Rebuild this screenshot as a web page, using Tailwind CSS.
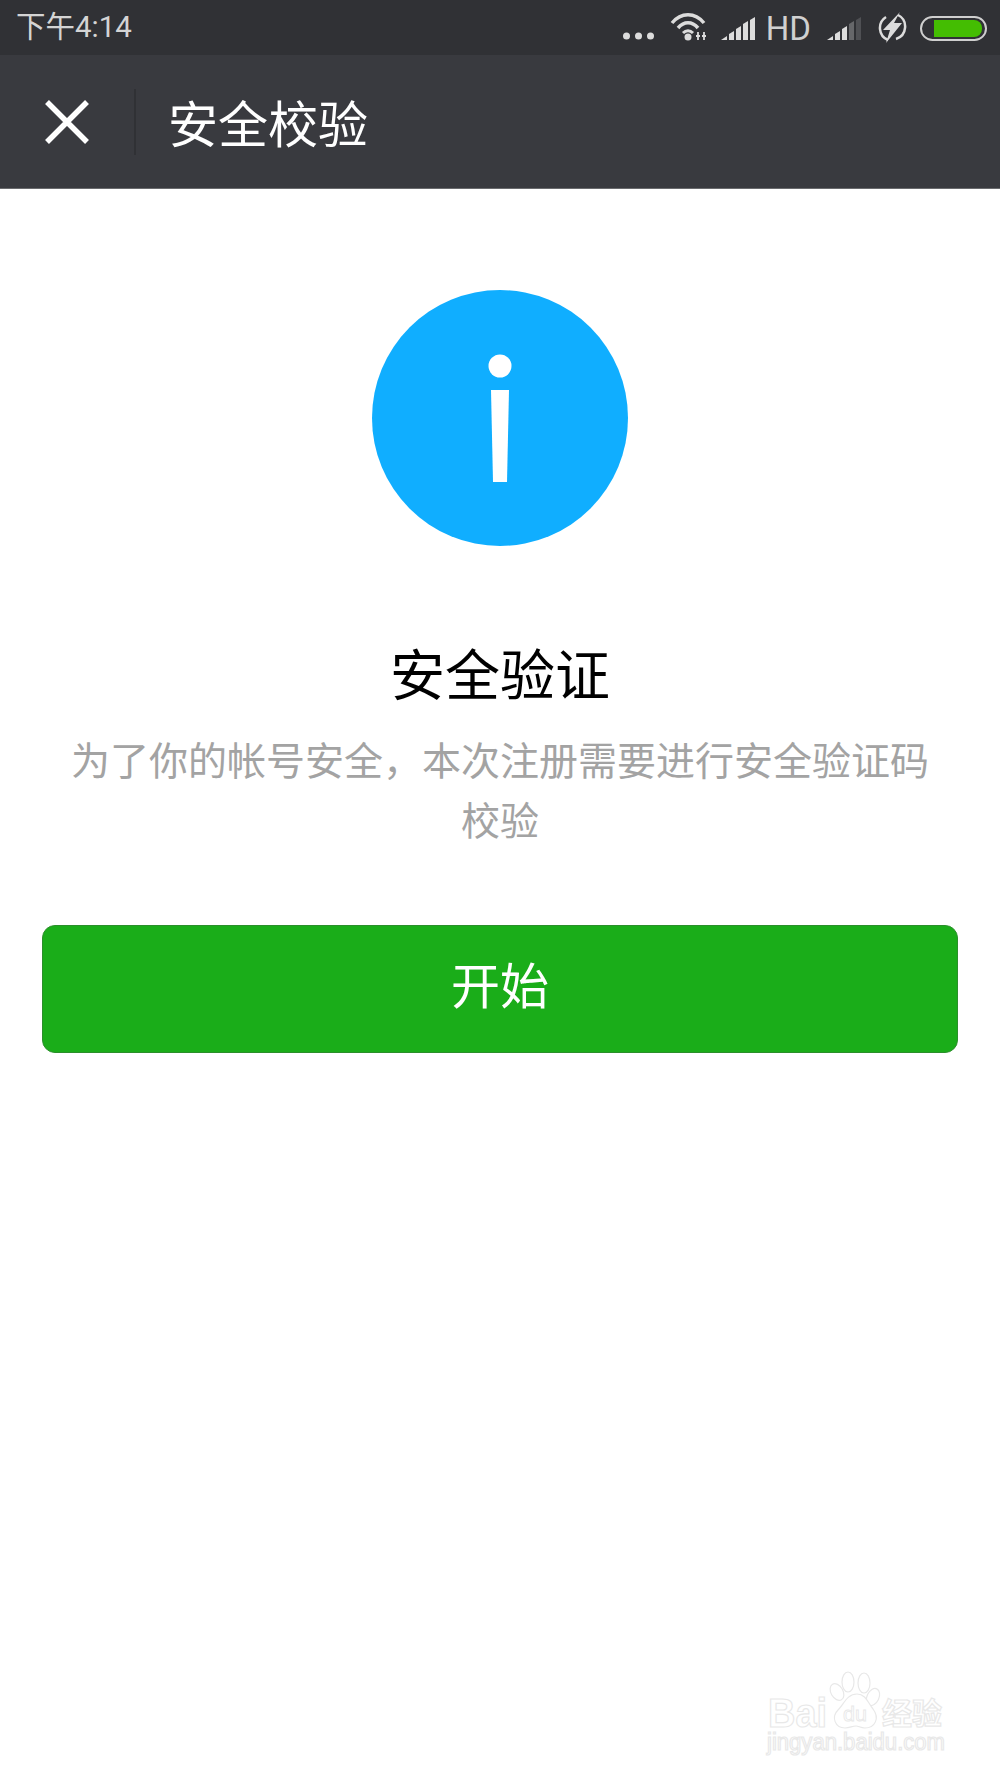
<!DOCTYPE html>
<html lang="zh">
  <head>
    <meta charset="utf-8" />
    <title>安全校验</title>
    <script src="https://cdn.jsdelivr.net/npm/@tailwindcss/browser@4"></script>
  </head>
  <body>
    <div class="relative w-[1000px] h-[1778px] overflow-hidden bg-white font-['Noto_Sans_CJK_SC',sans-serif]">
      <!-- status bar -->
      <div class="flex items-center justify-between h-[55px] pl-[16px] pr-[13px] bg-[#303135] text-[#d4d4d4]">
        <span class="text-[29.5px] leading-none font-['Roboto','Noto_Sans_CJK_SC',sans-serif] mt-[1px]">下午4:14</span>
        <div class="flex items-center">
          <svg class="w-[32px] h-[55px]" viewBox="0 0 32 55" fill="#dcdcdc">
            <circle cx="3.5" cy="36" r="3.5" /><circle cx="15.5" cy="36" r="3.5" /><circle cx="27.5" cy="36" r="3.5" />
          </svg>
          <svg class="w-[38px] h-[55px] ml-[15px]" viewBox="0 0 38 55" fill="none" stroke="#dcdcdc">
            <path d="M2 23C11 12 25 12 34 23" stroke-width="3.5" />
            <path d="M8 28C14 21 22 21 28 28" stroke-width="3.5" />
            <path d="M13 33C16 30 20 30 23 33" stroke-width="3" />
            <circle cx="18" cy="37" r="3.5" fill="#dcdcdc" stroke="none" />
            <path d="M28 32V40M34 32V40M26 36H30M32 36H36" stroke-width="1.8" />
          </svg>
          <svg class="w-[35px] h-[55px] ml-[13px]" viewBox="0 0 35 55" fill="#dcdcdc">
            <path d="M0 40L6 36V40Z" /><path d="M8 40V34L13 31V40Z" /><path d="M15 40V29L20 26V40Z" /><path d="M22 40V24L27 21V40Z" /><path d="M29 40V20L34 17V40Z" />
          </svg>
          <span class="ml-[10px] text-[33px] leading-none font-normal font-['Roboto',sans-serif] text-[#d0d0d0] mt-[1px]">HD</span>
          <svg class="w-[35px] h-[55px] ml-[16px]" viewBox="0 0 35 55">
            <path fill="#dcdcdc" d="M0 40L6 36V40Z" /><path fill="#dcdcdc" d="M8 40V34L13 31V40Z" /><path fill="#dcdcdc" d="M15 40V29L20 26V40Z" />
            <path fill="#66676a" d="M22 40V24L27 21V40Z" /><path fill="#4f5054" d="M29 40V20L34 17V40Z" />
          </svg>
          <svg class="w-[30px] h-[55px] ml-[15px]" viewBox="0 0 30 55" fill="none">
            <path d="M9 17A13 13 0 0 0 11 40M21 15A13 13 0 0 1 19 39" stroke="#dcdcdc" stroke-width="2.5" />
            <path d="M23 12L6 30H13L9 43L25 23H17Z" fill="#dcdcdc" />
          </svg>
          <div class="flex items-center w-[67px] h-[25px] ml-[13px] pl-[12px] pr-[3px] border-2 border-[#cfcfcf] rounded-full mt-[1px]">
            <div class="w-full h-[17px] bg-[#44bd02] rounded-r-[8px]"></div>
          </div>
        </div>
      </div>

      <!-- nav -->
      <div class="flex items-center h-[134px] bg-[#393a3f] border-b border-[#6a6b6e]">
        <div class="flex justify-center w-[134px]">
          <svg class="w-[44px] h-[44px]" viewBox="0 0 44 44" fill="none" stroke="#ffffff" stroke-width="5.5">
            <path d="M2 2L42 42M42 2L2 42" />
          </svg>
        </div>
        <div class="w-[2px] h-[66px] bg-[#303135]"></div>
        <span class="ml-[32px] text-[50px] leading-none text-white mt-[-1px]">安全校验</span>
      </div>

      <!-- message -->
      <div class="flex flex-col items-center">
        <svg class="w-[256px] h-[256px] mt-[101px]" viewBox="0 0 256 256">
          <circle cx="128" cy="128" r="128" fill="#10aeff" />
          <circle cx="128" cy="76" r="11.5" fill="#ffffff" />
          <path d="M119 100H137L135 192H121Z" fill="#ffffff" />
        </svg>
        <h1 class="mt-[85px] text-[55px] leading-[80px] font-normal text-black">安全验证</h1>
        <p class="w-[880px] mt-[17px] text-[39px] leading-[60px] text-center text-[#a3a3a3]">为了你的帐号安全&#65292;本次注册需要进行安全验证码校验</p>
      </div>

      <!-- button -->
      <div class="px-[42px] mt-[77px]">
        <button class="block w-full h-[128px] pb-[14px] bg-[#1aad19] border border-[#2b8f2b] rounded-[13px] text-[49px] leading-none text-white">开始</button>
      </div>

      <!-- watermark -->
      <svg class="absolute left-[760px] top-[1665px] w-[200px] h-[105px]" viewBox="0 0 200 105" fill="#ffffff" stroke="#e8e8e8" stroke-width="1.2">
        <ellipse cx="77" cy="27" rx="6" ry="9" transform="rotate(-30 77 27)" />
        <ellipse cx="88" cy="17" rx="6" ry="10" />
        <ellipse cx="104" cy="18" rx="6" ry="10" />
        <ellipse cx="113" cy="32" rx="6" ry="9" transform="rotate(25 113 32)" />
        <path d="M97 29C106 29 108 38 113 44C120 53 115 63 105 63C100 63 99 61 96 61C92 61 90 63 85 63C75 63 71 52 78 45C84 39 87 29 97 29Z" />
        <text x="8" y="62" font-family="Liberation Sans" font-size="41" font-weight="700" textLength="59" lengthAdjust="spacingAndGlyphs">Bai</text>
        <text x="83" y="56" font-family="Liberation Sans" font-size="20" stroke-width="0.8" textLength="24" lengthAdjust="spacingAndGlyphs">du</text>
        <text x="122" y="59" font-family="Noto Sans CJK SC" font-size="30" font-weight="700">经验</text>
        <text x="7" y="85" font-family="Liberation Sans" font-size="23" textLength="178" lengthAdjust="spacingAndGlyphs">jingyan.baidu.com</text>
      </svg>
    </div>
  </body>
</html>
